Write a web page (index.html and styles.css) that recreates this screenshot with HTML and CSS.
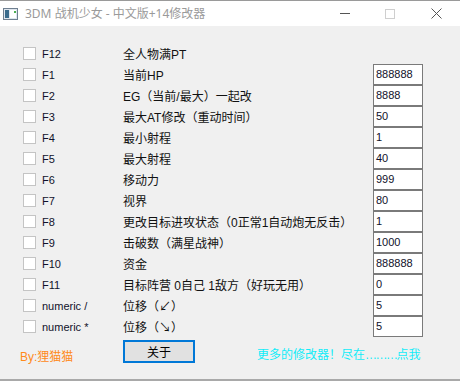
FILE: index.html
```html
<!DOCTYPE html>
<html lang="zh-CN">
<head>
  <meta charset="UTF-8" />
  <title>3DM 战机少女 - 中文版+14修改器</title>
  <link rel="stylesheet" href="styles.css">
</head>
<body>
  <div class="window">
    <div class="titlebar">
      <svg class="app-icon" width="15" height="12" viewBox="0 0 15 12">
        <rect x="0.5" y="0.5" width="14" height="11" fill="#dfe6ee" stroke="#6f7f90"/>
        <rect x="2" y="2" width="4" height="8" fill="#3a6b8c"/>
        <rect x="7" y="2" width="6" height="8" fill="#ffffff"/>
        <rect x="11" y="3" width="2" height="2" fill="#4caf50"/>
      </svg>
      <span class="title">3DM 战机少女 - 中文版+14修改器</span>
      <div class="controls">
        <span class="ctl ctl-min"></span>
        <span class="ctl ctl-max"></span>
        <svg class="ctl ctl-close" width="11" height="11" viewBox="0 0 11 11">
          <path d="M0.5 0.5 L10.5 10.5 M10.5 0.5 L0.5 10.5" stroke="#555" stroke-width="1" fill="none"/>
        </svg>
      </div>
    </div>

    <div class="client">
      <div class="rows">
        <div class="row"><span class="check"></span><span class="key">F12</span><span class="desc">全人物满PT</span></div>
        <div class="row"><span class="check"></span><span class="key">F1</span><span class="desc">当前HP</span><span class="field">888888</span></div>
        <div class="row"><span class="check"></span><span class="key">F2</span><span class="desc">EG（当前/最大）一起改</span><span class="field">8888</span></div>
        <div class="row"><span class="check"></span><span class="key">F3</span><span class="desc">最大AT修改（重动时间）</span><span class="field">50</span></div>
        <div class="row"><span class="check"></span><span class="key">F4</span><span class="desc">最小射程</span><span class="field">1</span></div>
        <div class="row"><span class="check"></span><span class="key">F5</span><span class="desc">最大射程</span><span class="field">40</span></div>
        <div class="row"><span class="check"></span><span class="key">F6</span><span class="desc">移动力</span><span class="field">999</span></div>
        <div class="row"><span class="check"></span><span class="key">F7</span><span class="desc">视界</span><span class="field">80</span></div>
        <div class="row"><span class="check"></span><span class="key">F8</span><span class="desc">更改目标进攻状态（0正常1自动炮无反击）</span><span class="field">1</span></div>
        <div class="row"><span class="check"></span><span class="key">F9</span><span class="desc">击破数（满星战神）</span><span class="field">1000</span></div>
        <div class="row"><span class="check"></span><span class="key">F10</span><span class="desc">资金</span><span class="field">888888</span></div>
        <div class="row"><span class="check"></span><span class="key">F11</span><span class="desc">目标阵营 0自己 1敌方（好玩无用）</span><span class="field">0</span></div>
        <div class="row"><span class="check"></span><span class="key">numeric /</span><span class="desc">位移（↙）</span><span class="field">5</span></div>
        <div class="row"><span class="check"></span><span class="key">numeric *</span><span class="desc">位移（↘）</span><span class="field">5</span></div>
      </div>

      <div class="footer">
        <span class="by">By:狸猫猫</span>
        <button class="about">关于</button>
        <span class="more">更多的修改器！尽在<span class="dots">………</span>点我</span>
      </div>
    </div>
  </div>
</body>
</html>
```

FILE: styles.css
```css
:root {
  --client: #f0f0f0;
  --field-border: #7a7a7a;
  --check-border: #c4c4c4;
  --accent: #0078d7;
}

* {
  box-sizing: border-box;
  margin: 0;
  padding: 0;
}

html, body {
  width: 460px;
  height: 381px;
  overflow: hidden;
  background: #a9a9a9;
}

body {
  font-family: "Liberation Sans", "Noto Sans CJK SC", sans-serif;
  color: #000;
}

.window {
  height: 379px;
  display: flex;
  flex-direction: column;
  background: var(--client);
  border-top: 1px solid #9a9a9a;
}

/* Title bar */
.titlebar {
  height: 25px;
  background: #fff;
  display: flex;
  align-items: center;
  padding-left: 3px;
}

.app-icon {
  display: block;
  margin-top: 1px;
}

.title {
  margin-left: 7px;
  font-family: "Noto Sans", "Noto Sans CJK SC", sans-serif;
  font-size: 12px;
  color: #9a9a9a;
  line-height: 1;
}

.controls {
  margin-left: auto;
  display: flex;
  align-items: center;
}

.ctl {
  display: block;
}

.ctl-min {
  width: 10px;
  height: 1px;
  background: #555;
  margin-right: 35px;
}

.ctl-max {
  width: 10px;
  height: 10px;
  border: 1px solid #cfcfcf;
  margin-right: 36px;
}

.ctl-close {
  margin-right: 18px;
}

/* Client area */
.client {
  flex: 1;
  display: flex;
  flex-direction: column;
  padding-top: 17px;
}

.rows {
  display: flex;
  flex-direction: column;
}

.row {
  height: 21px;
  display: flex;
  align-items: center;
  padding-left: 23px;
}

.check {
  width: 13px;
  height: 13px;
  background: #fff;
  border: 1px solid var(--check-border);
  flex: none;
}

.key {
  width: 81px;
  margin-left: 6px;
  font-size: 11px;
  color: #10102a;
}

.desc {
  flex: 1;
  font-size: 12px;
  color: #111;
}

.field {
  width: 50px;
  height: 21px;
  margin-right: 37px;
  background: #fff;
  border: 1px solid var(--field-border);
  font-size: 11px;
  line-height: 19px;
  padding-left: 2px;
  color: #10102a;
}

/* Footer */
.footer {
  margin-top: 2px;
  display: flex;
  align-items: center;
  padding-left: 20px;
}

.by {
  width: 103px;
  font-size: 12px;
  color: #ff8a1a;
  margin-top: 8px;
}

.about {
  width: 72px;
  height: 23px;
  background: #e1e1e1;
  border: 2px solid var(--accent);
  font-family: "Noto Sans CJK SC", sans-serif;
  font-size: 12px;
  color: #000;
}

.more {
  margin-left: 62px;
  margin-top: 4px;
  font-size: 12px;
  color: #12ecf8;
}

.more .dots {
  letter-spacing: -1.5px;
}
```
